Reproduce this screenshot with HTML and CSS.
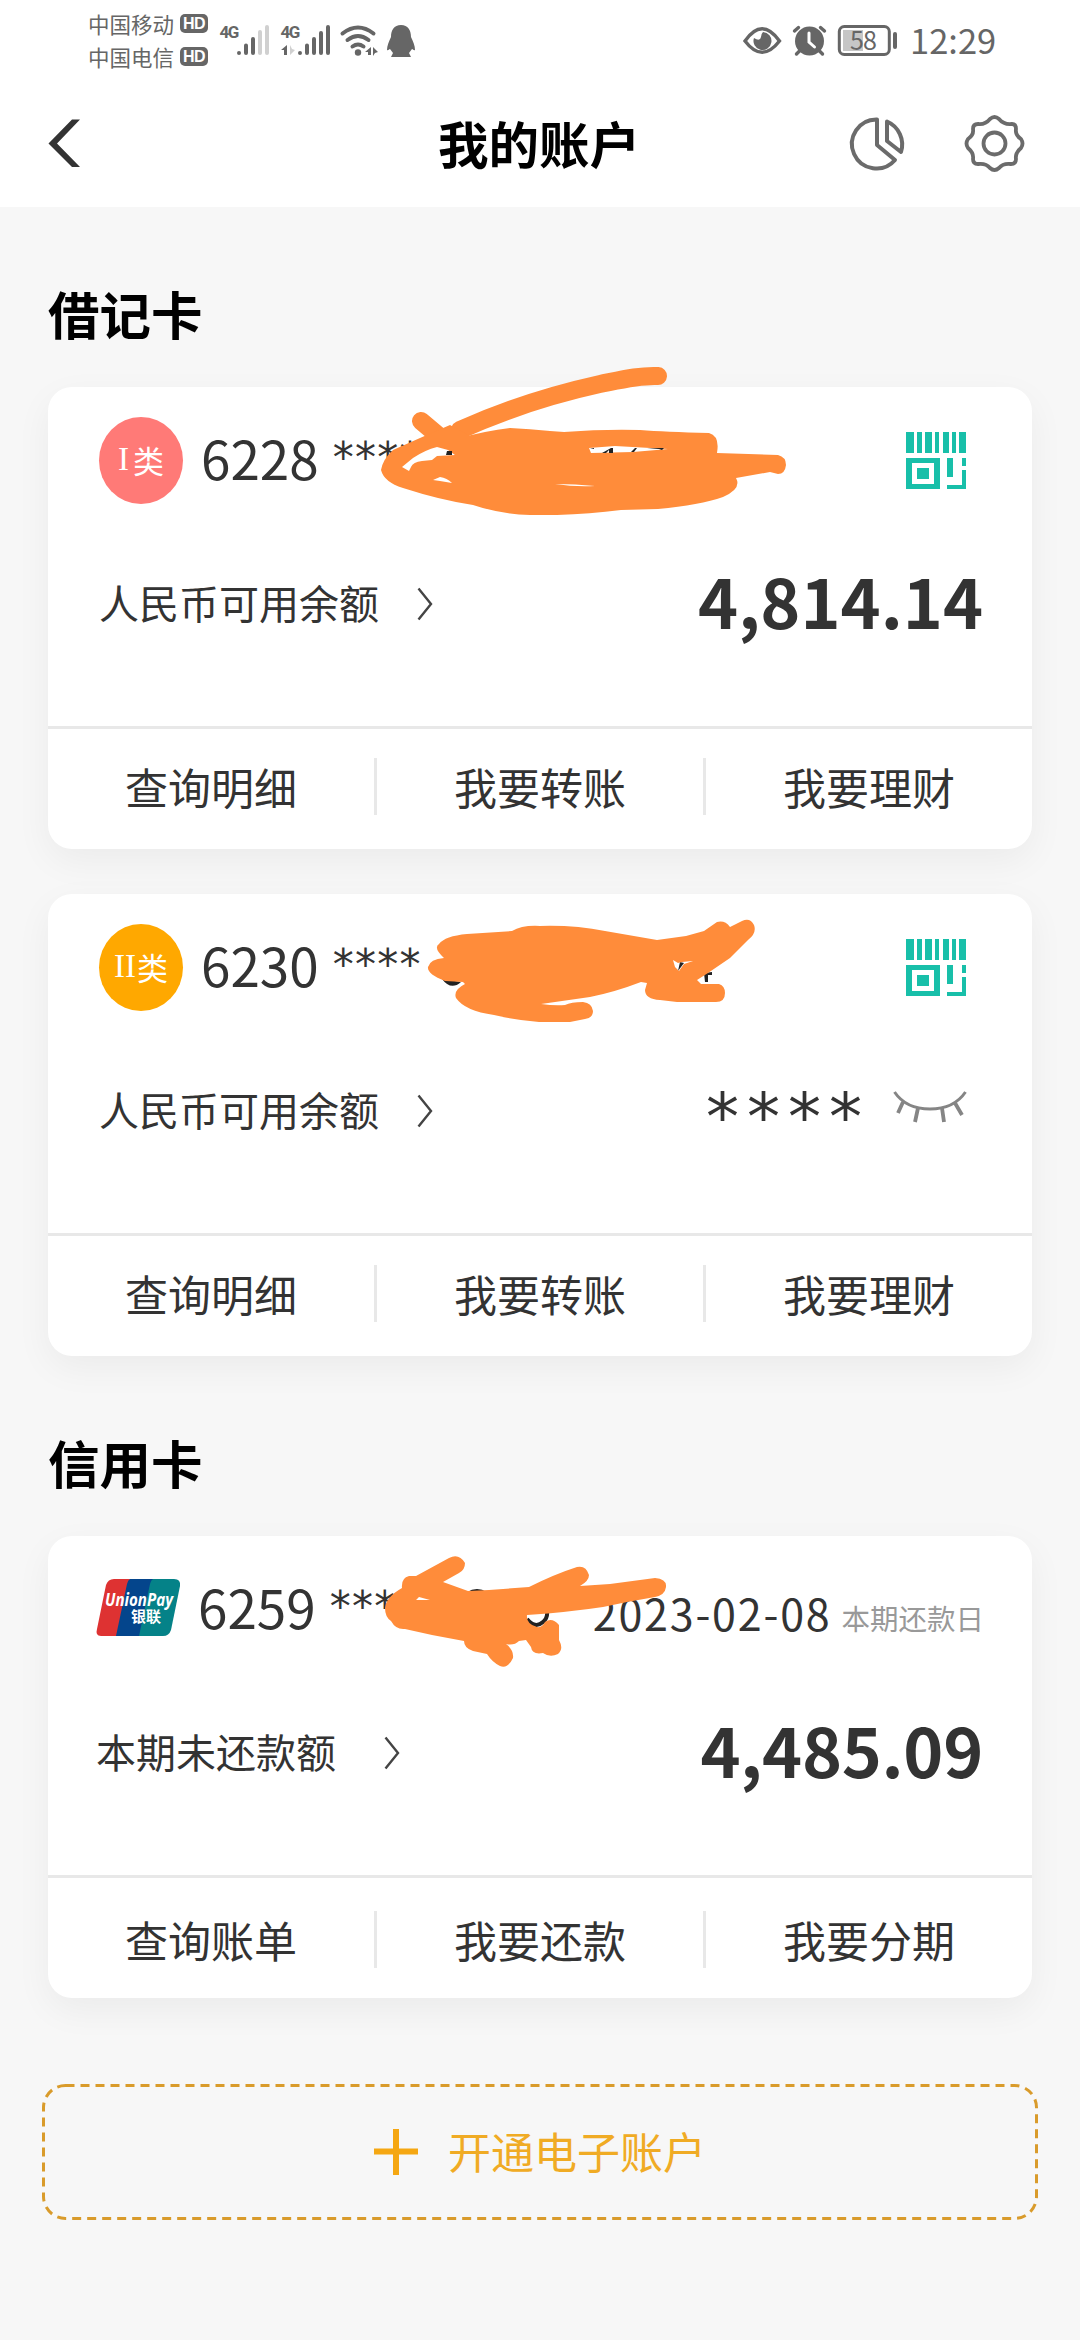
FILE: index.html
```html
<!DOCTYPE html>
<html lang="zh-CN">
<head>
<meta charset="utf-8">
<title>我的账户</title>
<link rel="stylesheet" href="styles.css">
</head>
<body>
<svg class="defs" width="0" height="0" aria-hidden="true">
  <symbol id="qr" viewBox="0 0 60 57">
    <path d="M0 0h8v21H0zM11 0h5v21h-5zM19 0h7v21h-7zM29 0h4v21h-4zM37 0h6v21h-6zM46 0h4v21h-4zM53 0h7v21h-7z"/>
    <path fill-rule="evenodd" d="M0 26h34v31H0zM6 31v21h22V31zM11 36h12v11H11z"/>
    <path d="M41 26h6v19h-6zM56 26h4v8h-4zM56 38h4v19H41v-4h15z"/>
  </symbol>
  <symbol id="chev" viewBox="0 0 16 34"><path d="M1.5 1.5L14 17 1.5 32.5" fill="none" stroke="#444" stroke-width="2.4"/></symbol>
</svg>

<header class="top">
  <div class="status">
    <div class="carriers">
      <div class="carrier">中国移动<b class="hd">HD</b></div>
      <div class="carrier">中国电信<b class="hd">HD</b></div>
    </div>
    <svg class="signals" width="196" height="42" viewBox="219 20 196 42">
      <g fill="none" stroke="#666" stroke-width="4" stroke-linecap="round">
        <path d="M239 53v.1M246 45.500v7.500M253 39v14"/>
        <path d="M260 32v21M267 27v26" stroke="#d0d0d0"/>
        <path d="M300 53v.1M307 45.500v7.500M314 39v14M321 33v20M328 27v26"/>
        <path d="M342.500 33.500q15.500-12 31 0M347.500 40q10.500-8 21 0M352.500 46.500q5.500-4 11 0"/>
      </g>
      <circle cx="358" cy="52.500" r="3.200" fill="#666"/>
      <path d="M365 52l6-5v8h-3v-3zM373 47l5 5-3 1-2 3z" fill="#666"/>
      <path d="M281 50l6-5v10h-3v-5z" fill="#666"/>
      <path d="M290 45v10l5-5-3-1z" fill="#d0d0d0"/>
      <path d="M401 25c-7 0-10 5-10 12-2 4-4 9-4 13 1 1 2-1 3-1l3 4-2 4h20l-2-4 3-4c1 0 2 2 3 1 0-4-2-9-4-13 0-7-3-12-10-12z" fill="#666"/>
      <text x="219.500" y="38" class="net">4G</text>
      <text x="280.500" y="38" class="net">4G</text>
    </svg>
    <svg class="tray" width="155" height="42" viewBox="743 20 155 42">
      <path d="M745 41q17-24.500 34.500 0q-17.500 22.500-34.500 0z" fill="none" stroke="#666" stroke-width="3.400"/>
      <path d="M763 32a9 9 0 1 1-9 6q6 4 7-1 0-3 2-5z" fill="#666"/>
      <circle cx="809.500" cy="41" r="14.500" fill="#666"/>
      <path d="M809 33v9l5.500 5" fill="none" stroke="#fff" stroke-width="3" stroke-linecap="round"/>
      <path d="M794.500 31l4-3.500M824.500 31l-4-3.500M796.500 54l3-3M822.500 54l-3-3" stroke="#666" stroke-width="3.400" stroke-linecap="round"/>
      <rect x="843" y="30" width="20" height="21" fill="#c6c6c6"/>
      <rect x="839.300" y="26.500" width="50" height="28" rx="5" fill="none" stroke="#666" stroke-width="3"/>
      <path d="M895 34v13" stroke="#666" stroke-width="4" stroke-linecap="round"/>
      <text x="850" y="50" class="batt">58</text>
    </svg>
    <span class="clock">12:29</span>
  </div>
  <nav class="bar">
    <svg class="back" width="34" height="52" viewBox="48 117 34 52"><path d="M72 119.500h8L57 143.500 80 167h-8L48.500 143.500z" fill="#333"/></svg>
    <h1 class="title">我的账户</h1>
    <svg class="pie" width="56" height="54" viewBox="850 116 56 54" fill="none" stroke="#6b6b6b" stroke-width="4" stroke-linejoin="round">
      <path d="M877 119.500A24.500 24.500 0 1 0 895 160L877 145z"/><path d="M887 121.500A25 25 0 0 1 901 152L887 141z"/>
    </svg>
    <svg class="gear" width="60" height="60" viewBox="963 113 60 60" fill="none" stroke="#6b6b6b" stroke-width="3.800" stroke-linejoin="round">
      <circle cx="993.500" cy="143.500" r="11"/>
      <path d="M989 119q4.500-4 9 0q5 6 13 5q4 0 4 5q-1 6 5 10q3 4.500 0 9q-6 5-5 11q0 5-5 5q-8-1-12 4q-4.500 4-9 0q-4-5-12-4q-5 0-5-5q1-6-5-11q-3-4.500 0-9q6-4 5-10q0-5 5-5q7 1 12-5z"/>
    </svg>
  </nav>
</header>

<main class="page">
  <h2 class="section">借记卡</h2>
  <section class="card">
    <div class="head">
      <span class="badge red"><i class="roman">I</i>类</span>
      <span class="num">6228</span><span class="mask">****</span>
      <svg class="qr" width="60" height="57"><use href="#qr"/></svg>
    </div>
    <div class="balance"><span class="label">人民币可用余额</span><svg class="chev" width="16" height="34"><use href="#chev"/></svg><strong class="amount">4,814.14</strong></div>
    <div class="actions"><span>查询明细</span><span>我要转账</span><span>我要理财</span></div>
    <svg class="scribble s1" width="430" height="170" viewBox="370 355 430 170">
      <path d="M421 421L440 437M658 376C640 375 620 380 600 384C550 395 500 412 460 430" class="brush"/>
      <path d="M393 450L420 438L450 425L470 436L460 438Q485 431 510 428Q530 429 550 431L564 432Q604 429 640 430Q665 432 709 433Q720 436 717 453L778 455Q786 457 786 465Q785 474 778 474L770 472L736 478Q742 489 723 497Q700 505 658 509L621 510Q590 514 557 515L530 515Q500 514 473 505Q440 500 403 488Q384 482 381 470Q383 459 393 450z" class="paint"/>
      <path d="M402 467L413 458Q425 450 437 447L448 450L455 455L437 456L432 460L422 461Q413 462 411 467L409 471z M433 480l7-3q7 1 12 6l-12-2z M589 448l26-2 53 3-35 3-42 1z M555 484q20 0 40 2q-20 1-40-2z" fill="#fff"/>
      <path d="M447 451h5v4h-6zM590 448h4v1zM602 453l9-5h2v5h-4v-3l-3 3zM631 452l4-4h2l-3 4zM647 448h17l-2 2-3-1z" fill="#222"/>
    </svg>
  </section>

  <section class="card">
    <div class="head">
      <span class="badge amber"><i class="roman">II</i>类</span>
      <span class="num">6230</span><span class="mask">****</span>
      <svg class="qr" width="60" height="57"><use href="#qr"/></svg>
    </div>
    <div class="balance"><span class="label">人民币可用余额</span><svg class="chev" width="16" height="34"><use href="#chev"/></svg>
      <span class="hidden">****</span>
      <svg class="lash" width="72" height="32" viewBox="894 1091 72 32" fill="none" stroke="#858585" stroke-width="3">
        <path d="M894.500 1092Q906 1109 930 1109Q954 1109 965.500 1092"/><path d="M903 1102l-5 11M918 1108l-3 14M942 1108l2 14M955 1103l7 12" stroke-width="3.800"/>
      </svg>
    </div>
    <div class="actions"><span>查询明细</span><span>我要转账</span><span>我要理财</span></div>
    <svg class="scribble s2" width="350" height="120" viewBox="420 910 350 120">
      <path d="M442 979q9 12 19 3z M678 971l2-9 4 1zM704 973l8-1v3h-4v7h-3z" fill="#222"/>
      <path fill-rule="evenodd" class="paint" d="M444 958Q433 948 439 944Q445 936 467 934L512 931Q522 925 540 926Q575 925 605 931L657 940L686 936L704 931L717 922Q725 920 730 927L742 921Q750 917 754 925Q757 933 748 940L730 958L708 973L697 980L701 984L719 984Q725 986 725 993Q725 1002 716 1002L677 1002L660 1000Q645 999 645 990L647 983L641 982Q615 992 590 997L541 1004Q555 1006 565 1005Q571 1002 583 1002Q592 1003 593 1011Q593 1018 585 1019L570 1022L539 1022Q515 1020 494 1015Q465 1011 456 998Q453 990 465 984L463 982L445 981Q427 974 428 967Q430 959 444 958zM673 960l2 7 4 4 5-7 9-3-11 1-4 1z"/>
    </svg>
  </section>

  <h2 class="section second">信用卡</h2>
  <section class="card credit">
    <div class="head">
      <svg class="union" width="84" height="57" viewBox="0 0 84 57">
        <path d="M18 0H34L24 57H5Q-1 57 1 50L10 6Q12 0 18 0z" fill="#de3232"/>
        <path d="M34 0H60L50 57H20L31 5Q32 1 34 0z" fill="#04458c"/>
        <path d="M57 0H78Q85 0 84 7L75 51Q73 57 67 57H43L54 5Q55 1 57 0z" fill="#058288"/>
        <text x="9" y="27" class="up" textLength="68" lengthAdjust="spacingAndGlyphs">UnionPay</text>
        <text x="35" y="43" class="upcn">银联</text>
      </svg>
      <span class="num">6259</span><span class="mask">****</span>
      <span class="date">2023-02-08</span><span class="due">本期还款日</span>
    </div>
    <div class="balance"><span class="label">本期未还款额</span><svg class="chev far" width="16" height="34"><use href="#chev"/></svg><strong class="amount">4,485.09</strong></div>
    <div class="actions"><span>查询账单</span><span>我要还款</span><span>我要分期</span></div>
    <svg class="scribble s3" width="300" height="130" viewBox="375 1545 300 130">
      <path d="M468 1594q9-6 18 0M527 1619q8 10 16 3 5-4 4-11" fill="none" stroke="#222" stroke-width="4"/>
      <path fill-rule="evenodd" class="paint" d="M385 1608Q386 1597 402 1588Q401 1578 409 1576L416 1576L449 1558Q459 1553 465 1563Q465 1570 459 1573L443 1582L468 1591L489 1590L529 1587Q555 1574 577 1567Q586 1565 589 1575Q589 1581 580 1586L610 1584L640 1580L655 1578Q667 1579 666 1587Q665 1595 655 1597L627 1602L603 1607Q570 1612 527 1615Q526 1624 537 1627Q542 1628 545 1622Q552 1617 559 1625L559 1640Q564 1649 558 1654Q550 1658 543 1653Q532 1655 531 1647L526 1640L519 1641Q514 1646 506 1644Q514 1650 513 1658Q508 1669 500 1666Q492 1662 487 1654L473 1651Q464 1648 464 1641L432 1635L405 1629Q396 1630 391 1621Q385 1617 385 1608zM416 1600l14 0-11-3z"/>
    </svg>
  </section>

  <button class="open">
    <svg class="dashes" width="996" height="136" viewBox="0 0 996 136"><rect x="1.500" y="1.500" width="993" height="133" rx="22" fill="none" stroke="#d99b2b" stroke-width="3" stroke-dasharray="9 6"/></svg>
    <svg width="44" height="46" viewBox="0 0 44 46"><path d="M22 0v46M0 22.500h44" stroke="#f5a712" stroke-width="6"/></svg>
    <span class="label">开通电子账户</span>
  </button>
</main>
</body>
</html>
```
FILE: styles.css
```css
* { box-sizing: border-box; }
body {
  margin: 0;
  width: 1080px;
  height: 2340px;
  overflow: hidden;
  background: #f7f7f7;
  color: #333;
  font-family: "Noto Sans CJK SC", sans-serif;
  line-height: 1;
}
svg { display: block; flex: none; overflow: visible; }
.defs { position: absolute; }
.top { height: 207px; background: #fff; }
.status { display: flex; height: 81px; padding: 7px 0 0 88px; color: #666; }
.carriers { display: flex; flex-direction: column; width: 131px; }
.carrier { display: flex; align-items: center; gap: 6px; height: 33px; font-size: 21.500px; }
.hd {
  width: 28px;
  height: 19px;
  border-radius: 5px;
  background: #666;
  color: #fff;
  font: bold 16px/19px "Liberation Sans", sans-serif;
  letter-spacing: -0.5px;
  text-align: center;
}
.signals { margin-top: 13px; }
.net { font: bold 17px Roboto, sans-serif; fill: #666; letter-spacing: -1.500px; }
.tray { margin: 13px 0 0 328px; }
.batt { font: 25px "Noto Sans CJK SC", sans-serif; fill: #666; letter-spacing: -1px; }
.clock { margin: 15px 0 0 12px; font-size: 34.500px; }
.bar { display: flex; align-items: center; height: 124px; padding: 0 56px 0 48px; }
.title { margin: 0 0 0 356px; padding-bottom: 2px; font-size: 50.500px; color: #000; }
.pie { margin-left: 210px; }
.gear { margin-left: auto; }

.page { padding: 0 48px; }
.section { margin: 0; height: 180px; padding-top: 80px; font-size: 51.500px; color: #000; }
.second { height: 135px; padding-top: 35px; }
.card {
  position: relative;
  height: 462px;
  margin-bottom: 45px;
  border-radius: 24px;
  background: #fff;
  box-shadow: 0 12px 36px rgba(0, 0, 0, 0.05);
}
.head { display: flex; align-items: center; height: 147px; padding: 0 66px 0 51px; }
.badge {
  display: flex;
  align-items: center;
  justify-content: center;
  gap: 4px;
  width: 84px;
  height: 87px;
  border-radius: 50%;
  color: #fff;
  font-size: 31px;
  padding-bottom: 2px;
}
.roman { font: 33px "Liberation Serif", serif; }
.red { background: #ff7a77; }
.amber { background: #ffa800; gap: 1px; }
.num { margin-left: 18px; padding-bottom: 6px; font-size: 53px; }
.mask { margin-left: 14px; padding-bottom: 6px; font: 42px/1 "DejaVu Sans", sans-serif; letter-spacing: 1.300px; }
.qr { margin-left: auto; fill: #18bfa9; }
.balance { display: flex; align-items: center; height: 140px; margin-bottom: 52px; padding: 0 49px 0 51px; font-size: 40px; }
.label { padding-bottom: 4px; }
.chev { margin-left: 38px; }
.amount { margin-left: auto; padding-bottom: 8px; font-size: 68px; }
.hidden { margin-left: auto; padding-top: 14px; font: 66px/1 "DejaVu Sans", sans-serif; letter-spacing: 8px; }
.lash { margin: -8px 17px 0 24px; }
.actions { display: flex; align-items: center; height: 123px; padding-bottom: 5px; border-top: 3px solid #e8e8e8; font-size: 43px; }
.actions span { flex: 1; height: 57px; line-height: 57px; text-align: center; }
.actions span + span { border-left: 3px solid #e8e8e8; }
.credit { margin-bottom: 86px; }
.credit .head, .credit .balance { padding-left: 48px; }
.credit .head { padding-right: 48px; }
.credit .actions { padding: 3px 0 0; }
.credit .far { margin-left: 48px; }
.credit .amount { letter-spacing: -0.3px; }
.union { margin-top: -5px; }
.date { margin: 5px 0 0 auto; font-size: 43px; letter-spacing: 1.800px; }
.due { margin: 18px 0 0 10px; font-size: 28.500px; color: #999; }

.scribble { position: absolute; }
.s1 { left: 322px; top: -32px; }
.s2 { left: 372px; top: 16px; }
.s3 { left: 327px; top: 9px; }
.paint { fill: #ff8c3a; }
.brush { fill: none; stroke: #ff8c3a; stroke-width: 18px; stroke-linecap: round; stroke-linejoin: round; }
.up { font: italic bold 17px "Open Sans", sans-serif; fill: #fff; }
.upcn { font: bold 15px "Noto Sans CJK SC", sans-serif; fill: #fff; }

.open {
  position: relative;
  display: flex;
  align-items: center;
  justify-content: center;
  gap: 30px;
  width: 996px;
  height: 136px;
  margin-left: -6px;
  padding: 0;
  border: 0;
  background: none;
  color: #f0ab24;
  font: 43px/1 "Noto Sans CJK SC", sans-serif;
}
.dashes { position: absolute; inset: 0; }
```
